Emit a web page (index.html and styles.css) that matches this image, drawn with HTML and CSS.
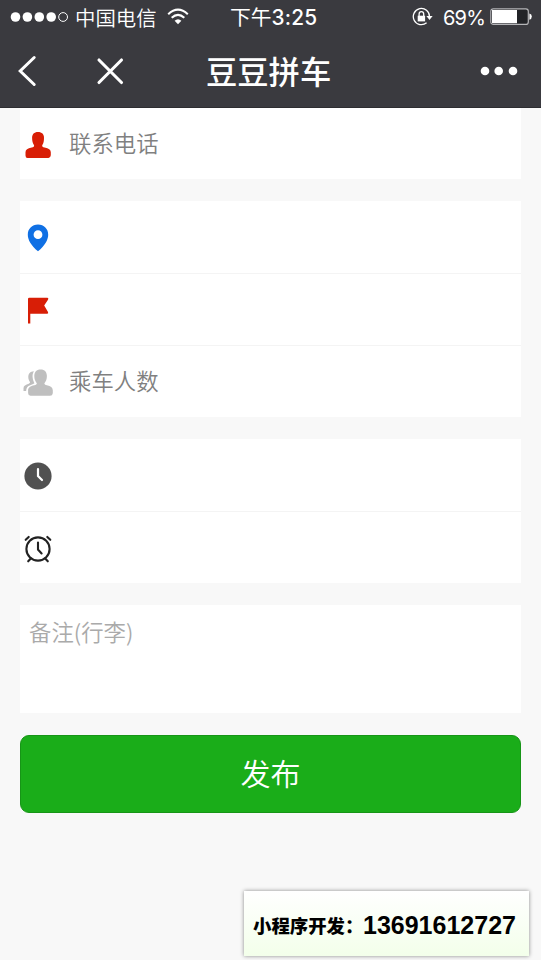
FILE: index.html
```html
<!DOCTYPE html>
<html lang="zh-CN">
<head>
<meta charset="utf-8">
<title>豆豆拼车</title>
<link rel="stylesheet" href="styles.css">
</head>
<body>
<header class="header">
  <div class="status">
    <svg class="signal" width="60" height="12" viewBox="0 0 60 12"><g fill="#fff"><circle cx="5.5" cy="6" r="4.8"/><circle cx="17.4" cy="6" r="4.8"/><circle cx="29.3" cy="6" r="4.8"/><circle cx="41.2" cy="6" r="4.8"/></g><circle cx="53.1" cy="6" r="4.4" fill="none" stroke="#fff"/></svg>
    <span class="carrier">中国电信</span>
    <svg class="wifi" width="22" height="18" viewBox="0 0 22 18"><g fill="none" stroke="#fff" stroke-width="2.1"><path d="M1.2 6.2Q11 -2.8 20.8 6.2"/><path d="M4.7 9.8Q11 4 17.3 9.8"/></g><path d="M7.6 12.700Q11 9.700 14.400 12.700L11 16.200Z" fill="#fff"/></svg>
    <span class="time">下午<b>3:25</b></span>
    <svg class="lock" width="22" height="20" viewBox="0 0 22 20"><path d="M14.600 15.800A8.100 8.100 0 1 1 17.500 9.700" fill="none" stroke="#fff" stroke-width="1.3"/><path d="M14.400 9h6.200l-3.100 4z" fill="#fff"/><path d="M5.700 8.700h7.400v5.700H5.700z" fill="#fff"/><path d="M7.100 9V7a2.300 2.300 0 0 1 4.600 0v2" fill="none" stroke="#fff" stroke-width="1.3"/></svg>
    <span class="percent">69%</span>
    <svg class="battery" width="43" height="18" viewBox="0 0 43 18"><rect x=".8" y=".8" width="37.5" height="15.6" rx="2.5" fill="#222327" stroke="#b5b5b8" stroke-width="1.2"/><path d="M2 2h25v13.200H2z" fill="#fff"/><path d="M39.400 5.500q2.400.5 2.400 3.100t-2.400 3.100z" fill="#fff"/></svg>
  </div>
  <nav class="nav">
    <svg class="back" width="20" height="32" viewBox="0 0 20 32"><path d="M17.200 2.500 3.200 16l14 13.500" fill="none" stroke="#fff" stroke-width="3" stroke-linecap="round"/></svg>
    <svg class="close" width="28" height="28" viewBox="0 0 28 28"><path d="M3 3l22.500 22.500M25.500 3 3 25.500" stroke="#fff" stroke-width="3.100" stroke-linecap="round"/></svg>
    <h1 class="title">豆豆拼车</h1>
    <svg class="more" width="38" height="10" viewBox="0 0 38 10"><g fill="#fff"><circle cx="5" cy="5" r="4.300"/><circle cx="18.700" cy="5" r="4.300"/><circle cx="33" cy="5" r="4.300"/></g></svg>
  </nav>
</header>
<main class="form">
  <section class="group first">
    <div class="row"><svg class="icon" viewBox="0 0 32 32"><path fill="#d81e06" d="M16 3c4 0 6 2.400 6 5.800 0 3.400-.4 5.700-1.800 7.400 0 1.400.4 2 2.400 2.300 4.200.8 6.200 2.200 6.200 4.800v3Q28.500 29 26.500 29h-21Q3.500 29 3.500 26.500v-3.200c0-2.600 2-4 6.200-4.800 2-.3 2.400-.9 2.400-2.300-1.400-1.700-2-4-2-7.400C10.100 5.400 12 3 16 3z"/></svg><span>联系电话</span></div>
  </section>
  <section class="group">
    <div class="row"><svg class="icon" viewBox="0 0 32 32"><path fill="#1070e4" fill-rule="evenodd" d="M16 2.500c6 0 10.200 4.300 10.200 10.200 0 5-3.200 10.700-10.200 16.600C9 23.400 5.800 17.700 5.800 12.700 5.800 6.800 10 2.500 16 2.500zm0 5.800a4.400 4.400 0 1 0 0 8.800 4.400 4.400 0 0 0 0-8.800z"/></svg></div>
    <div class="row"><svg class="icon" viewBox="0 0 32 32"><path fill="#d81e06" d="M6 4Q6 2.700 7.300 2.700H25.500Q27 3.200 26 4.700L22.200 10.500 26 17Q26.700 18.500 25.200 18.800H8.300V28.500H6z"/></svg></div>
    <div class="row"><svg class="icon" viewBox="0 0 32 32"><path fill="#bfbfbf" d="M18.600 2.500c4.200 0 6.300 2.700 6.300 6.600 0 3.200-1 5.500-2.500 7.200 0 1.200.8 1.600 2.500 2 3.800.8 5.900 2.200 5.900 5v3Q30.500 28.800 28 28.800H8.500Q6.100 28.500 6.100 26v-2.800c0-2.800 2.300-4.100 6.200-5 1.700-.4 2.500-.8 2.500-2-1.500-1.700-2.500-4-2.500-7.100 0-3.900 2.100-6.600 6.300-6.600z"/><path fill="#bfbfbf" d="M11.900 4.200C10.800 6 10.300 8 10.700 11c.3 2.500 1.200 3.700 1.700 5.300-1 .8-2.500 1.300-4.200 2-2.600.9-4 2.700-4.100 5.700H1.500v-2.800c0-2.500 2.200-3.600 5.300-4.500.9-.3 1.300-.8 1.200-1.600-1-1.300-1.700-2.800-1.700-5 0-3.500 1.800-5.800 5.600-5.900z"/></svg><span>乘车人数</span></div>
  </section>
  <section class="group">
    <div class="row"><svg class="icon" viewBox="0 0 32 32"><circle cx="16" cy="16" r="13.600" fill="#515151"/><path d="M16 9V16l4 4" fill="none" stroke="#fff" stroke-width="2.200" stroke-linecap="round"/></svg></div>
    <div class="row"><svg class="icon" viewBox="0 0 32 32"><g fill="none" stroke="#222" stroke-width="2.100" stroke-linecap="round"><circle cx="16" cy="16" r="11.600"/><path d="M16 9.500v7l3.600 4M3.700 6.800l3-2.900M28.300 6.800l-3-2.900M8.800 25.500l-2.600 2.800M23.200 25.500l2.600 2.800"/></g></svg></div>
  </section>
  <section class="remark">备注(行李)</section>
  <button class="submit" type="button">发布</button>
</main>
<aside class="contact"><span class="label">小程序开发：</span><span class="phone">13691612727</span></aside>
</body>
</html>
```
FILE: styles.css
```css
* { box-sizing: border-box; }
body {
  margin: 0;
  height: 960px;
  overflow: hidden;
  display: flex;
  flex-direction: column;
  background: #f8f8f8;
  font-family: "Noto Sans CJK SC", sans-serif;
}
svg { display: block; flex: none; }
.header { height: 108px; background: #3a3a3f; color: #fff; border-bottom: 1px solid #2d2d31; }
.status {
  height: 34px;
  padding-left: 10px;
  display: flex;
  align-items: center;
  font-size: 20px;
  line-height: 34px;
  white-space: nowrap;
}
.carrier { width: 82px; margin-left: 5px; font-weight: 350; font-size: 20.4px; }
.wifi { margin-left: 10px; }
.time { width: 90px; margin-left: 41px; padding-top: 1px; font-family: Inter, "Noto Sans CJK SC", sans-serif; font-weight: 400; font-size: 20.8px; }
.time b { font-weight: 500; letter-spacing: 0.2px; }
.lock { margin-left: 92px; }
.percent { width: 43px; margin-left: 9px; padding-top: 1px; font-family: Inter, sans-serif; font-weight: 400; font-size: 20px; letter-spacing: -0.8px; }
.battery { margin-left: 4px; }
.nav { display: flex; align-items: center; height: 74px; padding-left: 17px; }
.close { margin-left: 59px; }
.title { margin: 0 0 0 82px; width: 127px; font-size: 31.3px; font-weight: 500; line-height: 60px; white-space: nowrap; }
.more { margin-left: 147px; }
.form { display: flex; flex-direction: column; gap: 22px; padding: 0 20px; }
.group { background: #fff; }
.row {
  height: 72px;
  padding: 1px 2px 0;
  display: flex;
  align-items: center;
  gap: 15px;
  color: #808080;
  font-size: 22.4px;
  font-weight: 350;
}
.row span { position: relative; top: -3px; }
.row + .row { padding-top: 3px; border-top: 1px solid #f4f4f4; }
.first .row { height: 71px; padding-top: 3px; }
.icon { width: 32px; height: 32px; }
.remark { height: 108px; padding: 9px 9px; background: #fff; color: #aaa; font-size: 22.4px; font-weight: 350; line-height: 34px; }
.submit {
  height: 78px;
  padding: 0 0 4px;
  border: 1px solid #179517;
  border-radius: 9px;
  background: #1aad19;
  color: #fff;
  font-family: inherit;
  font-size: 30px;
  font-weight: 350;
}
.contact {
  width: 285px;
  height: 65px;
  margin: auto 12px 4px auto;
  padding: 3px 0 0 9px;
  display: flex;
  align-items: center;
  background: linear-gradient(#fff, #f3ffea);
  box-shadow: 0 0 4px rgba(0, 0, 0, .45);
  color: #000;
  white-space: nowrap;
}
.label { width: 110px; font-size: 18.4px; font-weight: 900; }
.phone { font-family: "Liberation Sans", Arial, sans-serif; font-size: 25px; font-weight: 700; }
```
